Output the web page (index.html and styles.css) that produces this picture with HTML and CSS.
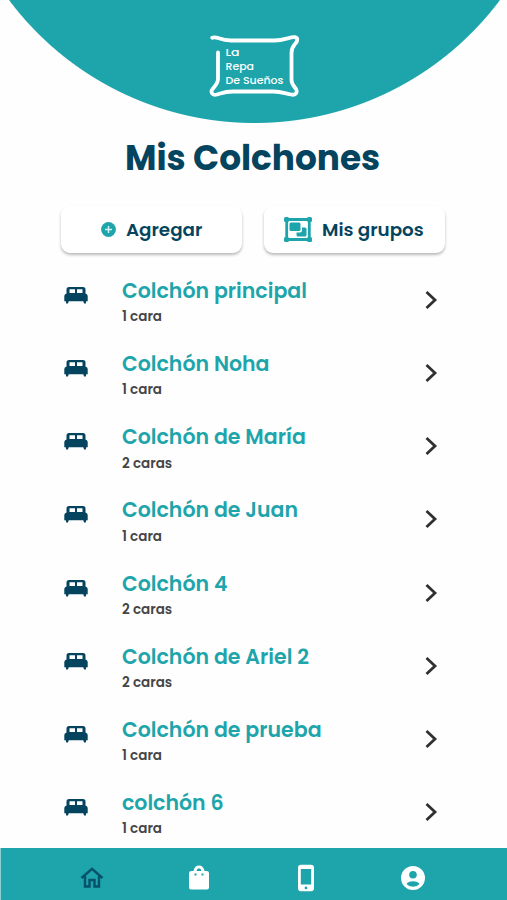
FILE: index.html
```html
<!DOCTYPE html>
<html lang="es">
<head>
<meta charset="utf-8">
<meta name="viewport" content="width=device-width, initial-scale=1">
<title>Mis Colchones</title>
<link rel="stylesheet" href="styles.css">
</head>
<body>
<svg class="symbols" aria-hidden="true">
<symbol id="bed" viewBox="0 0 24 17"><path fill-rule="evenodd" d="M5 0H19Q21.500 0 21.500 2.500V6.500Q23.700 7 23.700 9V14.300H22.200L21.800 16.500H20L19.300 14.300H4.700L4 16.500H2.200L1.800 14.300H.3V9Q.3 7 2.500 6.500V2.500Q2.500 0 5 0ZM5.500 2.300V6H11V2.300ZM13 2.300V6H18.500V2.300Z"/></symbol>
<symbol id="chevron" viewBox="0 0 14 20"><path d="M2.500 2L11 10L2.500 18" fill="none" stroke="currentColor" stroke-width="2.800"/></symbol>
</svg>
<div class="screen">
<header class="hero">
<svg class="logo" viewBox="0 0 92 66">
<path d="M3.200 4.800C8 2.500 10 7.500 22 7.500H65C76 7.500 81 3.500 86 4.200C89 5 89 8 86 11C82.500 15 82.500 17 82.500 20V47C82.500 51 85 53 87 56C89 60 86 62.500 82 61.500C75 60 72 58.500 64 58.500H24C16 58.500 13 60 8 61.500C3 63 1 59 4 55.500C7 52 9 50 9 46V19.500" fill="none" stroke="#fff" stroke-width="3.800" stroke-linecap="round" stroke-linejoin="round"/>
<g class="logo-text"><text x="16.500" y="22.800" textLength="14" lengthAdjust="spacingAndGlyphs">La</text><text x="16.500" y="36.800" textLength="28.500" lengthAdjust="spacingAndGlyphs">Repa</text><text x="16.500" y="50.500" textLength="58" lengthAdjust="spacingAndGlyphs">De Sueños</text></g>
</svg>
</header>
<h1>Mis Colchones</h1>
<div class="actions">
<button class="action add"><svg width="15" height="15" viewBox="0 0 15 15"><circle cx="7.500" cy="7.500" r="7.400"/><path d="M7.500 4v7M4 7.500h7" stroke="#d8f0f1" stroke-width="1.500"/></svg><span>Agregar</span></button>
<button class="action groups"><svg width="28" height="25" viewBox="0 0 28 25"><path d="M2.700 2.500H25.300V22.500H2.700Z" fill="none" stroke="currentColor" stroke-width="2.800"/><rect width="5" height="5" rx="1.500"/><rect x="23" width="5" height="5" rx="1.500"/><rect y="20" width="5" height="5" rx="1.500"/><rect x="23" y="20" width="5" height="5" rx="1.500"/><rect x="5.500" y="5.500" width="11" height="8.500" rx="1.500"/><path d="M18 10.500H21Q22.500 10.500 22.500 12V18Q22.500 19.500 21 19.500H14Q12.500 19.500 12.500 18V15.500H16Q18 15.500 18 13.500Z"/></svg><span>Mis grupos</span></button>
</div>
<ul class="list">
<li><svg class="bed"><use href="#bed"/></svg><div><h2>Colchón principal</h2><p>1 cara</p></div><svg class="chevron"><use href="#chevron"/></svg></li>
<li><svg class="bed"><use href="#bed"/></svg><div><h2>Colchón Noha</h2><p>1 cara</p></div><svg class="chevron"><use href="#chevron"/></svg></li>
<li><svg class="bed"><use href="#bed"/></svg><div><h2>Colchón de María</h2><p>2 caras</p></div><svg class="chevron"><use href="#chevron"/></svg></li>
<li><svg class="bed"><use href="#bed"/></svg><div><h2>Colchón de Juan</h2><p>1 cara</p></div><svg class="chevron"><use href="#chevron"/></svg></li>
<li><svg class="bed"><use href="#bed"/></svg><div><h2>Colchón 4</h2><p>2 caras</p></div><svg class="chevron"><use href="#chevron"/></svg></li>
<li><svg class="bed"><use href="#bed"/></svg><div><h2>Colchón de Ariel 2</h2><p>2 caras</p></div><svg class="chevron"><use href="#chevron"/></svg></li>
<li><svg class="bed"><use href="#bed"/></svg><div><h2>Colchón de prueba</h2><p>1 cara</p></div><svg class="chevron"><use href="#chevron"/></svg></li>
<li><svg class="bed"><use href="#bed"/></svg><div><h2>colchón 6</h2><p>1 cara</p></div><svg class="chevron"><use href="#chevron"/></svg></li>
</ul>
<nav>
<a class="active"><svg width="24" height="24" viewBox="0 0 24 24"><path d="M1.500 12L12 2.800L22.500 12M5 10V20.500H9.500V14H14.500V20.500H19V10" fill="none" stroke="currentColor" stroke-width="2.400"/></svg></a>
<a><svg width="22" height="26" viewBox="0 0 22 26"><path fill-rule="evenodd" d="M5.500 6C6 2.500 8 .5 11 .5S16 2.500 16.500 6H18.500Q21 6 21 8V22.500Q21 24.500 19 24.500H3Q1 24.500 1 22.500V8Q1 6 3.500 6ZM8.500 6H13.500Q13 3.300 11 3.300T8.500 6ZM6.500 8.500V10.500H8.500V8.500ZM13.500 8.500V10.500H15.500V8.500Z"/></svg></a>
<a><svg width="18" height="28" viewBox="0 0 18 28"><path fill-rule="evenodd" d="M4 .8H14Q17 .8 17 3.800V24.200Q17 27.200 14 27.200H4Q1 27.200 1 24.200V3.800Q1 .8 4 .8ZM3.800 5V20.500H14.200V5ZM9 22.500A1.400 1.400 0 1 0 9 25.300A1.400 1.400 0 1 0 9 22.500Z"/></svg></a>
<a><svg width="24" height="24" viewBox="0 0 24 24"><path fill-rule="evenodd" d="M12 0A12 12 0 1 0 12 24A12 12 0 1 0 12 0ZM12 5A3.800 3.800 0 1 1 12 12.600A3.800 3.800 0 1 1 12 5ZM5.500 18Q7 15.200 12 15.200T18.500 18Q16 20.800 12 20.800T5.500 18Z"/></svg></a>
</nav>
</div>
</body>
</html>
```
FILE: styles.css
```css
* { box-sizing: border-box; }
body { margin: 0; background: #fefefe; font-family: Poppins, Inter, sans-serif; overflow: hidden; }
.symbols { display: none; }
.screen { height: 900px; display: flex; flex-direction: column; }
.hero { height: 123px; flex: none; padding: 33px 0 0 209px; background: radial-gradient(circle at 254.5px -183.5px, #1da5ab 306px, transparent 307px); }
.logo { width: 92px; height: 66px; display: block; }
.logo-text { fill: #fff; font: 500 10.5px Poppins, sans-serif; }
h1 { margin: 13px 0 0 125px; height: 44px; line-height: 44px; font-size: 34.3px; font-weight: 700; color: #05445e; white-space: nowrap; }
.actions { display: grid; grid-template-columns: 181px 181px; gap: 22px; margin: 26px 0 0 61px; height: 47px; }
.action { display: flex; align-items: center; border: 0; border-radius: 9px; background: #fff; box-shadow: 0 2px 3px #0004; font: 600 18.3px Poppins, Inter, sans-serif; color: #05445e; white-space: nowrap; }
.action svg { fill: #1da5ab; color: #1da5ab; flex: none; }
.add { padding: 0 0 0 40px; gap: 10px; }
.groups { padding: 0 0 0 20px; gap: 10px; }
.list { list-style: none; margin: 21px 0 0; padding: 0 69px 0 64px; height: 574px; flex: none; }
li { display: grid; grid-template-columns: 58px 1fr 14px; height: 73.14px; }
h2 { margin: 0; height: 33.3px; line-height: 33px; font-size: 20.5px; font-weight: 600; color: #1da5ab; white-space: nowrap; }
p { margin: 0; height: 20px; line-height: 20px; font-size: 13.5px; font-weight: 600; color: #454547; }
.bed { width: 24px; height: 17px; margin-top: 13px; fill: #05445e; }
.chevron { width: 14px; height: 20px; margin-top: 16px; color: #303030; }
nav { height: 52px; flex: none; padding: 7px 40px 0 37px; background: #1da5ab; border-left: 1px solid #8bd0d3; display: grid; grid-template-columns: repeat(4, 107px); }
nav a { display: flex; align-items: center; justify-content: center; color: #fff; }
nav svg { fill: currentColor; }
nav .active { color: #05526a; }
```
